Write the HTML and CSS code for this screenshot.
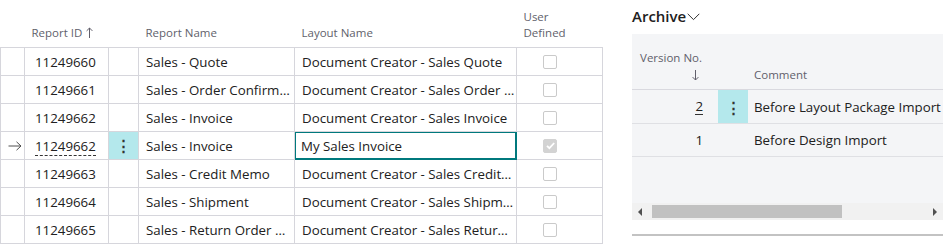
FILE: index.html
```html
<!DOCTYPE html>
<html>
<head>
<meta charset="utf-8">
<link rel="stylesheet" href="styles.css">
</head>
<body>
<div class="page">
  <table class="grid">
    <colgroup>
      <col class="c-ind"><col class="c-id"><col class="c-menu"><col class="c-name"><col class="c-layout"><col class="c-user">
    </colgroup>
    <thead>
      <tr>
        <th></th>
        <th>Report ID <svg class="sort" width="7" height="11" viewBox="0 0 7 11"><path d="M3.5 11V1M0.6 3.9L3.5 1L6.4 3.9" fill="none" stroke="#615f6b" stroke-width="1"/></svg></th>
        <th></th>
        <th>Report Name</th>
        <th>Layout Name</th>
        <th>User<br>Defined</th>
      </tr>
    </thead>
    <tbody>
      <tr><td></td><td class="id">11249660</td><td></td><td>Sales - Quote</td><td>Document Creator - Sales Quote</td><td class="chk"><span class="box"></span></td></tr>
      <tr><td></td><td class="id">11249661</td><td></td><td>Sales - Order Confirm…</td><td>Document Creator - Sales Order …</td><td class="chk"><span class="box"></span></td></tr>
      <tr><td></td><td class="id">11249662</td><td></td><td>Sales - Invoice</td><td>Document Creator - Sales Invoice</td><td class="chk"><span class="box"></span></td></tr>
      <tr class="current">
        <td class="ind"><svg width="14" height="10" viewBox="0 0 14 10"><path d="M0.5 5H13M8.5 0.8L13 5L8.5 9.2" fill="none" stroke="#505050" stroke-width="1"/></svg></td>
        <td class="id"><span class="link">11249662</span></td>
        <td class="menu"><span class="dots">&#8942;</span></td>
        <td>Sales - Invoice</td>
        <td class="edit">My Sales Invoice</td>
        <td class="chk"><span class="box checked"><svg width="11" height="11" viewBox="0 0 11 11"><path d="M2 5.8L4.4 8.2L9.2 3" fill="none" stroke="#fff" stroke-width="1.8"/></svg></span></td>
      </tr>
      <tr><td></td><td class="id">11249663</td><td></td><td>Sales - Credit Memo</td><td>Document Creator - Sales Credit…</td><td class="chk"><span class="box"></span></td></tr>
      <tr><td></td><td class="id">11249664</td><td></td><td>Sales - Shipment</td><td>Document Creator - Sales Shipm…</td><td class="chk"><span class="box"></span></td></tr>
      <tr><td></td><td class="id">11249665</td><td></td><td>Sales - Return Order …</td><td>Document Creator - Sales Retur…</td><td class="chk"><span class="box"></span></td></tr>
    </tbody>
  </table>

  <section class="archive">
    <h2 class="title">Archive <svg class="chev" width="13" height="8" viewBox="0 0 13 8"><path d="M0.7 0.8L6.5 6.6L12.3 0.8" fill="none" stroke="#303030" stroke-width="1"/></svg></h2>
    <div class="panel">
      <div class="ahead">
        <div class="h-ver">Version No.<br><svg class="down" width="7" height="11" viewBox="0 0 7 11"><path d="M3.5 0V10M0.6 7.1L3.5 10L6.4 7.1" fill="none" stroke="#615f6b" stroke-width="1"/></svg></div>
        <div class="h-menu"></div>
        <div class="h-com">Comment</div>
      </div>
      <div class="arow current">
        <div class="a-ver"><span class="ulink">2</span></div>
        <div class="a-menu"><span class="dots">&#8942;</span></div>
        <div class="a-com">Before Layout Package Import</div>
      </div>
      <div class="arow">
        <div class="a-ver">1</div>
        <div class="a-menu"></div>
        <div class="a-com">Before Design Import</div>
      </div>
      <div class="filler"></div>
      <div class="hscroll">
        <span class="arr left"></span>
        <div class="track"><div class="thumb"></div></div>
        <span class="arr right"></span>
      </div>
    </div>
    <div class="bottomline"></div>
  </section>
</div>
</body>
</html>
```

FILE: styles.css
```css
html, body {
  margin: 0;
  padding: 0;
  background: #fff;
}
body {
  font-family: "Open Sans", "Noto Sans", sans-serif;
  color: #212121;
  font-size: 13.3px;
}
.page {
  display: flex;
  align-items: flex-start;
  gap: 29px;
}
.grid {
  border-collapse: collapse;
  table-layout: fixed;
  width: 602px;
  flex: none;
}
.c-ind { width: 24px; }
.c-id { width: 84px; }
.c-menu { width: 30px; }
.c-name { width: 156px; }
.c-layout { width: 222px; }
.c-user { width: 86px; }
.grid th {
  height: 41px;
  padding: 0 0 6px 7px;
  text-align: left;
  vertical-align: bottom;
  font-weight: normal;
  font-size: 11.5px;
  line-height: 16px;
  color: #615f6b;
  border-bottom: 1px solid #d6d6dc;
  white-space: nowrap;
}
.sort { margin-left: 1px; vertical-align: -1px; }
.grid td {
  height: 27px;
  padding: 0 7px;
  border: 1px solid #d6d6dc;
  white-space: nowrap;
  overflow: hidden;
  vertical-align: middle;
  line-height: 18px;
}
.grid td.id { padding-left: 10px; }
.grid td.ind { padding: 0 0 0 7px; }
.grid td.ind svg { display: block; }
.grid td.menu {
  background: #b4e8ec;
  text-align: center;
  padding: 0;
}
.dots {
  font-size: 15px;
  font-weight: bold;
  color: #333;
}
.link {
  border-bottom: 1px dashed #333;
}
.grid td.edit {
  box-shadow: inset 0 0 0 1px #00797d;
  border-color: #00797d;
  padding-left: 6px;
}
.grid td.chk { padding-left: 26px; }
.box {
  display: block;
  width: 12px;
  height: 12px;
  border: 1px solid #cacaca;
  border-radius: 2px;
  background: #fff;
}
.box.checked {
  background: #d3d3d3;
  border-color: #d3d3d3;
}
.box svg { display: block; margin: 0.5px; }

.archive {
  flex: 1;
  min-width: 0;
}
.title {
  margin: 0;
  height: 34px;
  padding-top: 5px;
  box-sizing: border-box;
  font-size: 15px;
  font-weight: 600;
  line-height: 22px;
  color: #212121;
  display: flex;
  align-items: flex-start;
  gap: 1px;
}
.title .chev { margin-top: 8px; }
.panel {
  background: #f4f5f7;
  display: flex;
  flex-direction: column;
  height: 186px;
}
.ahead {
  display: flex;
  height: 56px;
  border-bottom: 1px solid #d9d9df;
  box-sizing: border-box;
  font-size: 11.5px;
  line-height: 16px;
  color: #615f6b;
}
.h-ver {
  flex: none;
  width: 86px;
  padding-right: 16px;
  box-sizing: border-box;
  text-align: right;
  padding-top: 16px;
  white-space: nowrap;
}
.down { display: inline-block; margin-right: 3px; margin-top: 4px; }
.h-menu { flex: none; width: 30px; }
.h-com {
  align-self: flex-end;
  padding: 0 0 6px 6px;
}
.arow {
  display: flex;
  height: 34px;
  border-bottom: 1px solid #dfe0e4;
  box-sizing: border-box;
  align-items: stretch;
  line-height: 18px;
}
.arow + .arow { height: 33px; }
.a-ver {
  flex: none;
  width: 86px;
  padding-right: 15px;
  box-sizing: border-box;
  display: flex;
  align-items: center;
  justify-content: flex-end;
}
.ulink { border-bottom: 1px solid #333; line-height: 16px; }
.a-menu {
  flex: none;
  width: 30px;
  display: flex;
  align-items: center;
  justify-content: center;
}
.arow.current .a-menu { background: #b4e8ec; }
.a-com {
  padding-left: 6px;
  display: flex;
  align-items: center;
  white-space: nowrap;
}
.filler { flex: 1; }
.hscroll {
  height: 17px;
  display: flex;
  align-items: center;
  background: #f1f1f1;
}
.arr {
  width: 20px;
  height: 17px;
  position: relative;
  flex: none;
}
.arr.left::after, .arr.right::after {
  content: "";
  position: absolute;
  top: 5px;
  width: 0;
  height: 0;
  border-top: 4px solid transparent;
  border-bottom: 4px solid transparent;
}
.arr.left::after { left: 6px; border-right: 4px solid #505050; }
.arr.right::after { right: 6px; border-left: 4px solid #505050; }
.track {
  flex: 1;
  height: 13px;
}
.thumb {
  width: 190px;
  height: 13px;
  background: #c1c1c1;
}
.bottomline {
  margin-top: 14px;
  height: 2px;
  background: #c3c3c3;
}
```
